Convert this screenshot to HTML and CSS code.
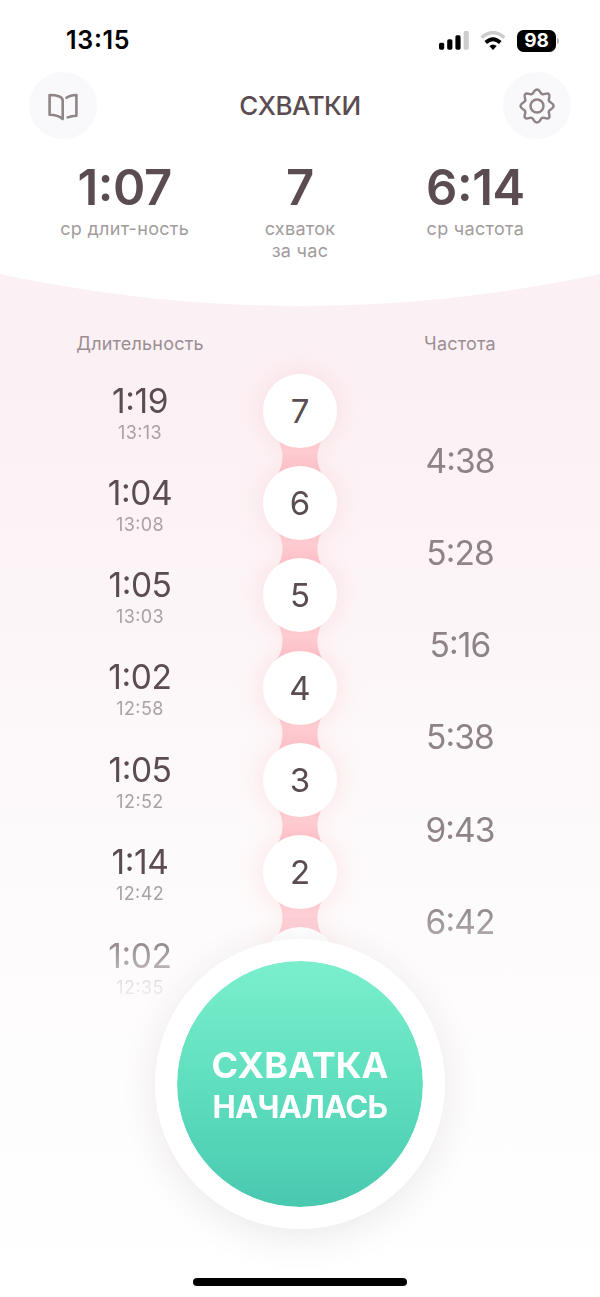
FILE: index.html
```
<!DOCTYPE html>
<html lang="ru">
<head>
<meta charset="utf-8">
<title>Схватки</title>
<link rel="stylesheet" href="styles.css">
</head>
<body>
<div class="app">
  <header class="header">
    <div class="status">
      <span class="status-time">13<i>:</i>15</span>
      <span class="status-icons">
        <svg class="signal" width="30" height="20" viewBox="0 0 30 20">
          <rect x="0" y="11.7" width="5.2" height="7" rx="1.6"/>
          <rect x="8.2" y="8.3" width="5.2" height="10.4" rx="1.6"/>
          <rect x="16.4" y="4.3" width="5.2" height="14.4" rx="1.6"/>
          <rect x="24.6" y="0" width="5.2" height="18.7" rx="1.6" fill="#cdcdcd"/>
        </svg>
        <svg class="wifi" width="26" height="20" viewBox="0 0 26 20">
          <path d="M1.6 6.6Q13-3.3 24.400 6.600" fill="none" stroke="#cdcdcd" stroke-width="3.600"/>
          <path d="M5.700 11.500Q13 5 20.300 11.500" fill="none" stroke="#000" stroke-width="3.700"/>
          <path d="M9.300 15.100Q13 11.700 16.700 15.100L13 18.900Z"/>
        </svg>
        <span class="battery">98</span>
        <span class="battery-tip"></span>
      </span>
    </div>
    <div class="nav">
      <button class="round" aria-label="Справка">
        <svg width="34" height="30" viewBox="0 0 34 30" fill="none" stroke="#8f8587" stroke-width="2.600" stroke-linecap="round" stroke-linejoin="round">
          <path d="M16.700 28V9.500C16.700 5.500 10.500 4 3.600 4V23.800C9.500 23.800 13.500 25.200 16.700 28Z"/>
          <path d="M20.500 6.800C23 4.900 26.500 4 30.400 4V24.800C27 24.800 24.300 25.400 21.700 26.400"/>
        </svg>
      </button>
      <h1 class="title">СХВАТКИ</h1>
      <button class="round" aria-label="Настройки">
        <svg width="38" height="38" viewBox="0 0 38 38" fill="none" stroke="#8f8587" stroke-width="2.500" stroke-linejoin="round">
          <path d="M19 2.500C22.200 2.500 22 6.300 24.200 7.200C26.500 8.100 28.900 5.200 30.900 7.200C32.900 9.200 30 11.500 30.900 13.800C31.800 16 35.600 15.800 35.600 19C35.600 22.200 31.800 22 30.900 24.200C30 26.500 32.900 28.900 30.900 30.900C28.900 32.900 26.500 30 24.200 30.900C22 31.800 22.200 35.600 19 35.600C15.800 35.600 16 31.800 13.800 30.900C11.500 30 9.200 32.900 7.200 30.900C5.200 28.900 8.100 26.500 7.200 24.200C6.300 22 2.500 22.200 2.500 19C2.500 15.800 6.300 16 7.200 13.800C8.100 11.500 5.200 9.200 7.200 7.200C9.200 5.200 11.500 8.100 13.800 7.200C16 6.300 15.800 2.500 19 2.500Z"/>
          <circle cx="19" cy="19" r="6.500"/>
        </svg>
      </button>
    </div>
    <div class="stats">
      <div class="stat"><b class="stat-value">1<i>:</i>07</b><span class="stat-label">ср длит-ность</span></div>
      <div class="stat"><b class="stat-value">7</b><span class="stat-label">схваток<br>за час</span></div>
      <div class="stat"><b class="stat-value">6<i>:</i>14</b><span class="stat-label">ср частота</span></div>
    </div>
  </header>

  <div class="heads"><span class="head">Длительность</span><span></span><span class="head">Частота</span></div>

  <main class="log">
    <div class="col">
      <div class="entry"><span class="len">1<i>:</i>19</span><span class="at">13<i>:</i>13</span></div>
      <div class="entry"><span class="len">1<i>:</i>04</span><span class="at">13<i>:</i>08</span></div>
      <div class="entry"><span class="len">1<i>:</i>05</span><span class="at">13<i>:</i>03</span></div>
      <div class="entry"><span class="len">1<i>:</i>02</span><span class="at">12<i>:</i>58</span></div>
      <div class="entry"><span class="len">1<i>:</i>05</span><span class="at">12<i>:</i>52</span></div>
      <div class="entry"><span class="len">1<i>:</i>14</span><span class="at">12<i>:</i>42</span></div>
      <div class="entry last"><span class="len">1<i>:</i>02</span><span class="at">12<i>:</i>35</span></div>
    </div>
    <div class="col chain">
      <svg width="0" height="0" class="defs"><defs>
        <linearGradient id="pink" x1="0" y1="0" x2="0" y2="1"><stop offset="0" stop-color="#fdc6cd"/><stop offset=".4" stop-color="#fdcbd1"/><stop offset="1" stop-color="#fcbac2"/></linearGradient>
        <symbol id="link" viewBox="0 0 56 42"><path d="M3 0C13 12 13 30 3 42H53C43 30 43 12 53 0Z" fill="url(#pink)"/></symbol>
      </defs></svg>
      <div class="node"><span class="ball">7</span><svg class="link"><use href="#link"/></svg></div>
      <div class="node"><span class="ball">6</span><svg class="link"><use href="#link"/></svg></div>
      <div class="node"><span class="ball">5</span><svg class="link"><use href="#link"/></svg></div>
      <div class="node"><span class="ball">4</span><svg class="link"><use href="#link"/></svg></div>
      <div class="node"><span class="ball">3</span><svg class="link"><use href="#link"/></svg></div>
      <div class="node"><span class="ball">2</span><svg class="link"><use href="#link"/></svg></div>
      <div class="node"><span class="ball">1</span></div>
    </div>
    <div class="col gaps">
      <span class="gap">4<i>:</i>38</span>
      <span class="gap">5<i>:</i>28</span>
      <span class="gap">5<i>:</i>16</span>
      <span class="gap">5<i>:</i>38</span>
      <span class="gap">9<i>:</i>43</span>
      <span class="gap">6<i>:</i>42</span>
    </div>
  </main>

  <button class="start"><span class="start-main">СХВАТКА</span><span class="start-sub">НАЧАЛАСЬ</span></button>
  <div class="home"></div>
</div>
</body>
</html>
```
FILE: styles.css
```
* { box-sizing: border-box; }
body { margin: 0; font-family: Inter, "Liberation Sans", sans-serif; color: #5a4c50; }
button { border: 0; padding: 0; font: inherit; }
/* colon raised to the middle of the digits */
i { font-style: normal; line-height: 0; vertical-align: 0.085em; }
.app {
  position: relative;
  width: 600px;
  height: 1297px;
  overflow: hidden;
  background: linear-gradient(#fbeff4 0, #fbf0f4 306px, #fcf4f7 560px, #fdfafb 850px, #fefdfd 1100px, #fff 1297px);
}
.header { height: 306px; background: #fff; clip-path: circle(1422px at 50% -1116px); }

.status { display: flex; justify-content: space-between; height: 72px; padding: 26px 41px 0 66px; color: #000; }
.status-time { font-size: 25px; line-height: 29px; font-weight: 600; letter-spacing: 0.7px; }
.status-icons { display: flex; align-items: flex-start; padding-top: 4.500px; }
.wifi { margin-left: 11px; }
.battery {
  width: 39px; height: 22px; margin: -1px 0 0 11px; border-radius: 6.500px; background: #000;
  color: #fff; font-size: 19px; line-height: 22px; font-weight: 700; text-align: center;
}
.battery-tip { width: 2px; height: 6px; margin: 7px 0 0 1px; border-radius: 0 2px 2px 0; background: #bbb; }

.nav { display: flex; justify-content: space-between; align-items: center; height: 67px; padding: 0 29px; }
.round { display: flex; align-items: center; justify-content: center; width: 68px; height: 67px; border-radius: 50%; background: #f9f9fc; }
.title { margin: 1px 0 0; font-size: 26px; line-height: 32px; font-weight: 500; letter-spacing: -0.5px; }

.stats { display: flex; padding: 20px 37px 0; }
.stat { flex: 1; display: flex; flex-direction: column; text-align: center; }
.stat-value { font-size: 49px; line-height: 58px; font-weight: 600; letter-spacing: -0.4px; }
.stat-label { font-size: 18px; line-height: 22px; letter-spacing: 0.3px; color: #a29b9d; margin-top: 1px; }

.heads, .log { display: grid; grid-template-columns: 160px 160px 160px; padding: 0 60px; }
.heads { height: 68px; padding-top: 27px; }
.head { font-size: 18px; line-height: 22px; letter-spacing: 0.2px; color: #9a8e92; text-align: center; }

.log {
  height: 686px;
  margin-top: -40px;
  padding-top: 40px;
  -webkit-mask-image: linear-gradient(#000 570px, transparent 680px);
  mask-image: linear-gradient(#000 570px, transparent 680px);
}
.col { display: flex; flex-direction: column; align-items: center; }
.entry { display: flex; flex-direction: column; align-items: center; height: 92.250px; padding-top: 7.700px; }
.last { padding-top: 9px; }
.len { font-size: 33.500px; line-height: 38px; letter-spacing: -0.4px; }
.at { font-size: 18px; line-height: 20px; margin-top: 3px; letter-spacing: 0.4px; color: #a9a1a4; }
.node { display: flex; flex-direction: column; align-items: center; height: 92.200px; }
.ball {
  position: relative; z-index: 1; flex: none; width: 74px; height: 74px; border-radius: 50%; background: #fff;
  font-size: 33px; line-height: 74px; text-align: center;
}
.node::before { content: ""; width: 74px; height: 74px; margin-bottom: -74px; flex: none; border-radius: 50%; box-shadow: 0 0 26px rgba(255, 175, 170, 0.33); }
.defs { display: block; flex: none; margin: 0; }
.link { position: relative; flex: none; width: 56px; height: 42px; margin-top: -12px; }
.gaps { padding-top: 41px; }
.gap { height: 92.250px; padding-top: 26.700px; font-size: 33.500px; line-height: 38px; color: #8e8488; letter-spacing: -0.9px; }

.start {
  position: absolute; left: 155px; top: 939px; z-index: 2;
  display: flex; flex-direction: column; align-items: center; justify-content: center;
  width: 290px; height: 290px; padding-top: 2px; border: 22px solid #fff; border-radius: 50%;
  background: linear-gradient(#7befcd, #5fdfbe 50%, #49c8b0) padding-box;
  box-shadow: 0 8px 36px rgba(70, 50, 60, 0.1);
  color: #fff; font-weight: 650;
}
.start-main { font-size: 36px; line-height: 44px; }
.start-sub { font-size: 31px; line-height: 40px; letter-spacing: -0.6px; }
.home { position: absolute; left: 193px; top: 1278px; width: 214px; height: 8px; border-radius: 4px; background: #000; }
```
